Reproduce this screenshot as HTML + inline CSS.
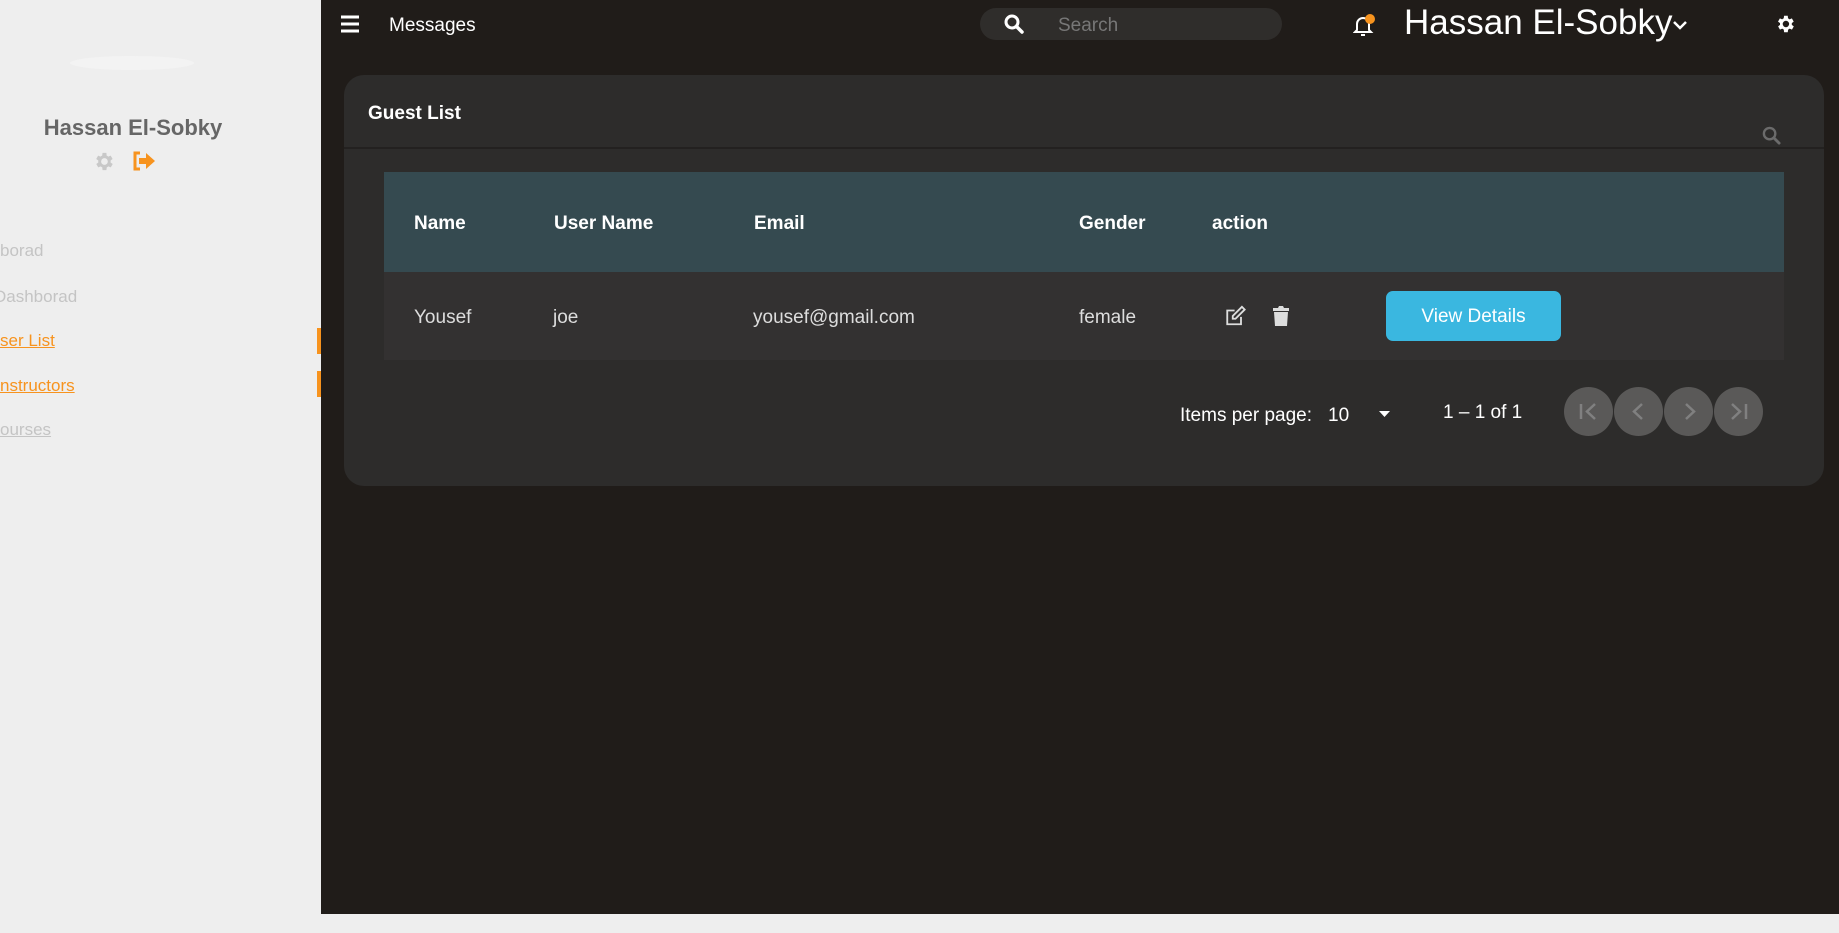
<!DOCTYPE html>
<html><head><meta charset="utf-8"><style>
*{margin:0;padding:0;box-sizing:border-box}
body{width:1839px;height:933px;background:#eeeeee;font-family:"Liberation Sans",sans-serif;position:relative;overflow:hidden}
.abs{position:absolute}
.side{left:0;top:0;width:321px;height:914px;background:#eeeeee}
.main{left:321px;top:0;width:1518px;height:914px;background:#201c19}
.nav{position:absolute;font-size:17px;white-space:nowrap}
.t{position:absolute;white-space:nowrap;color:#fff}
</style></head><body>
<div class="abs side">
  <div class="abs" style="left:70px;top:56px;width:124px;height:14px;border-radius:50%;background:#f3f3f3"></div>
  <div class="t" style="left:0;width:266px;text-align:center;top:115px;font-size:22px;font-weight:bold;color:#666">Hassan El-Sobky</div>
  <svg class="abs" style="left:92px;top:150px" width="23" height="23" viewBox="0 0 24 24"><path fill="#c8c8c8" d="M19.4 13a7.5 7.5 0 000-2l2.1-1.6-2-3.5-2.5 1a7.6 7.6 0 00-1.7-1L15 3h-4l-.4 2.9a7.6 7.6 0 00-1.7 1l-2.5-1-2 3.5L6.6 11a7.5 7.5 0 000 2l-2.1 1.6 2 3.5 2.5-1a7.6 7.6 0 001.7 1L11 21h4l.4-2.9a7.6 7.6 0 001.7-1l2.5 1 2-3.5zM13 15.5a3.5 3.5 0 110-7 3.5 3.5 0 010 7z"/></svg>
  <svg class="abs" style="left:132px;top:151px" width="25" height="20" viewBox="0 0 25 20"><path fill="none" stroke="#f7931e" stroke-width="3" d="M8 2H3v16h5"/><path fill="#f7931e" d="M7 7h7V2l9 8-9 8v-5H7z"/></svg>
  <div class="nav" style="left:0;top:241px;color:#c4c4c4">borad</div>
  <div class="nav" style="left:-6px;top:287px;color:#c4c4c4">Dashborad</div>
  <div class="nav" style="left:0;top:331px;color:#f7931e;text-decoration:underline">ser List</div>
  <div class="nav" style="left:0;top:376px;color:#f7931e;text-decoration:underline">nstructors</div>
  <div class="nav" style="left:0;top:420px;color:#c4c4c4;text-decoration:underline">ourses</div>
  <div class="abs" style="left:317px;top:328px;width:4px;height:26px;background:#f7931e"></div>
  <div class="abs" style="left:317px;top:371px;width:4px;height:26px;background:#f7931e"></div>
</div>
<div class="abs main"></div>
<svg class="abs" style="left:340px;top:15px" width="20" height="18" viewBox="0 0 20 18"><path stroke="#fff" stroke-width="3" d="M1 2h18M1 9h18M1 16h18"/></svg>
<div class="t" style="left:389px;top:15px;font-size:19px">Messages</div>
<div class="abs" style="left:980px;top:8px;width:302px;height:32px;border-radius:16px;background:#2f2d2b"></div>
<svg class="abs" style="left:1004px;top:14px" width="20" height="20" viewBox="0 0 20 20"><circle cx="8" cy="8" r="6" fill="none" stroke="#fff" stroke-width="3"/><path stroke="#fff" stroke-width="3.5" stroke-linecap="round" d="M13 13l5 5"/></svg>
<div class="t" style="left:1058px;top:15px;font-size:19px;color:#777">Search</div>
<svg class="abs" style="left:1353px;top:13px" width="22" height="24" viewBox="0 0 22 24"><path fill="none" stroke="#fff" stroke-width="2" d="M4 17V11a6 6 0 0112 0v6l2 2H2z"/><path stroke="#fff" stroke-width="2" d="M8 22h4"/><circle cx="17" cy="6" r="5" fill="#f7931e"/></svg>
<div class="t" style="left:1404px;top:3px;font-size:35px">Hassan El-Sobky</div>
<svg class="abs" style="left:1672px;top:19px" width="16" height="12" viewBox="0 0 16 12"><path fill="none" stroke="#fff" stroke-width="2.5" d="M2 3l6 6 6-6"/></svg>
<svg class="abs" style="left:1774px;top:13px" width="22" height="22" viewBox="0 0 24 24"><path fill="#fff" d="M19.4 13a7.5 7.5 0 000-2l2.1-1.6-2-3.5-2.5 1a7.6 7.6 0 00-1.7-1L15 3h-4l-.4 2.9a7.6 7.6 0 00-1.7 1l-2.5-1-2 3.5L6.6 11a7.5 7.5 0 000 2l-2.1 1.6 2 3.5 2.5-1a7.6 7.6 0 001.7 1L11 21h4l.4-2.9a7.6 7.6 0 001.7-1l2.5 1 2-3.5zM13 15.5a3.5 3.5 0 110-7 3.5 3.5 0 010 7z"/></svg>
<div class="abs" style="left:344px;top:75px;width:1480px;height:411px;border-radius:20px;background:#2d2c2b"></div>
<div class="t" style="left:368px;top:103px;font-size:19px;font-weight:bold">Guest List</div>
<div class="abs" style="left:344px;top:147px;width:1480px;height:2px;background:#232120"></div>
<svg class="abs" style="left:1762px;top:126px" width="19" height="19" viewBox="0 0 20 20"><circle cx="8" cy="8" r="6" fill="none" stroke="#6b6b6b" stroke-width="2.5"/><path stroke="#6b6b6b" stroke-width="3" stroke-linecap="round" d="M13 13l5 5"/></svg>
<div class="abs" style="left:384px;top:172px;width:1400px;height:100px;background:#354a50"></div>
<div class="abs" style="left:384px;top:272px;width:1400px;height:88px;background:#333131"></div>
<div class="t" style="left:414px;top:213px;font-size:19px;font-weight:bold">Name</div>
<div class="t" style="left:554px;top:213px;font-size:19px;font-weight:bold">User Name</div>
<div class="t" style="left:754px;top:213px;font-size:19px;font-weight:bold">Email</div>
<div class="t" style="left:1079px;top:213px;font-size:19px;font-weight:bold">Gender</div>
<div class="t" style="left:1212px;top:213px;font-size:19px;font-weight:bold">action</div>
<div class="t" style="left:414px;top:307px;font-size:19px;color:#ddd">Yousef</div>
<div class="t" style="left:553px;top:307px;font-size:19px;color:#ddd">joe</div>
<div class="t" style="left:753px;top:307px;font-size:19px;color:#ddd">yousef@gmail.com</div>
<div class="t" style="left:1079px;top:307px;font-size:19px;color:#ddd">female</div>
<svg class="abs" style="left:1224px;top:305px" width="23" height="22" viewBox="0 0 24 24"><path fill="none" stroke="#ddd" stroke-width="2" d="M18 13v8H3V6h8"/><path fill="none" stroke="#ddd" stroke-width="2" d="M19 2l3 3-10 10H9v-3z"/></svg>
<svg class="abs" style="left:1272px;top:305px" width="18" height="21" viewBox="0 0 18 21"><path fill="#ddd" d="M1 3h5l1-2h4l1 2h5v3H1zM2 7h14l-1 14H3z"/></svg>
<div class="abs" style="left:1386px;top:291px;width:175px;height:50px;border-radius:7px;background:#3ab7e0"></div>
<div class="t" style="left:1386px;width:175px;text-align:center;top:306px;font-size:19px">View Details</div>
<div class="t" style="left:1180px;top:405px;font-size:19px">Items per page:</div>
<div class="t" style="left:1328px;top:405px;font-size:19px">10</div>
<svg class="abs" style="left:1378px;top:410px" width="13" height="8" viewBox="0 0 13 8"><path fill="#fff" d="M1 1h11L6.5 7z"/></svg>
<div class="t" style="left:1443px;top:402px;font-size:19px">1 – 1 of 1</div>
<div class="abs" style="left:1564px;top:387px;width:49px;height:49px;border-radius:50%;background:#5a5958"></div>
<div class="abs" style="left:1614px;top:387px;width:49px;height:49px;border-radius:50%;background:#5a5958"></div>
<div class="abs" style="left:1664px;top:387px;width:49px;height:49px;border-radius:50%;background:#5a5958"></div>
<div class="abs" style="left:1714px;top:387px;width:49px;height:49px;border-radius:50%;background:#5a5958"></div>
<svg class="abs" style="left:1564px;top:387px" width="200" height="49" viewBox="0 0 200 49"><g fill="none" stroke="#808080" stroke-width="2.5"><path d="M17 17v15M31 17l-8 7.5 8 7.5"/><path d="M78 17l-8 7.5 8 7.5"/><path d="M122 17l8 7.5-8 7.5"/><path d="M168 17l8 7.5-8 7.5M182 17v15"/></g></svg>
</body></html>
